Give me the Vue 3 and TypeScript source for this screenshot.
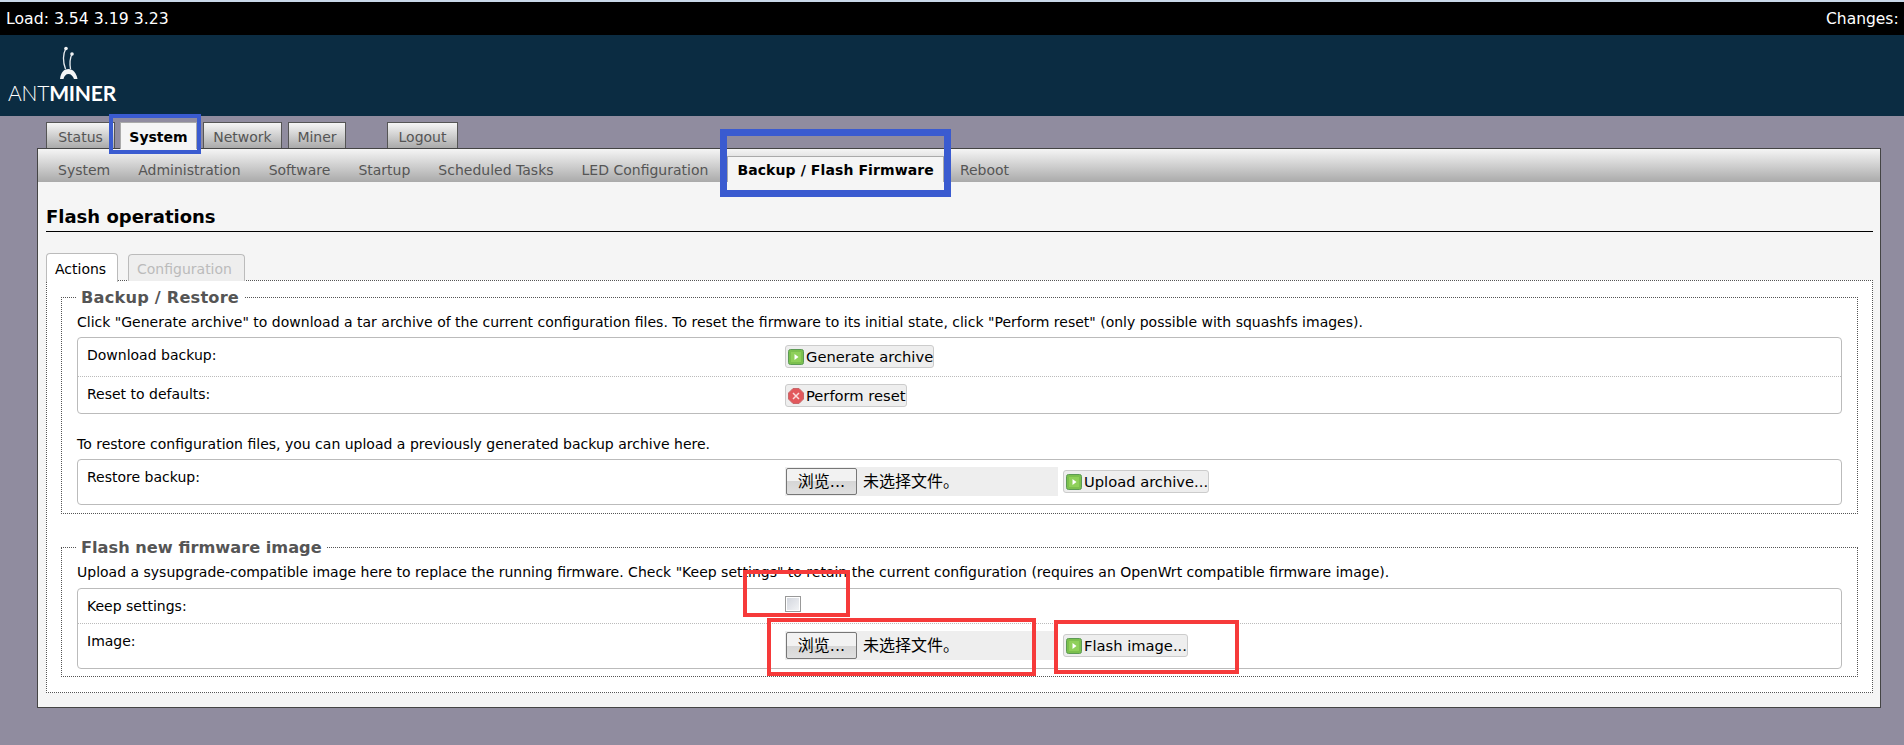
<script setup lang="ts">
const topTabs: { label: string; active?: boolean; gap?: boolean }[] = [
  { label: 'Status' },
  { label: 'System', active: true },
  { label: 'Network' },
  { label: 'Miner' },
  { label: 'Logout', gap: true },
]
const subTabs: { label: string; active?: boolean }[] = [
  { label: 'System' },
  { label: 'Administration' },
  { label: 'Software' },
  { label: 'Startup' },
  { label: 'Scheduled Tasks' },
  { label: 'LED Configuration' },
  { label: 'Backup / Flash Firmware', active: true },
  { label: 'Reboot' },
]
</script>

<template>
  <div class="page">
    <div class="status-bar">
      <span>Load: 3.54 3.19 3.23</span>
      <span class="changes">Changes: 0</span>
    </div>
    <header class="brand">
      <svg class="ant" width="20" height="34" viewBox="0 0 20 34">
        <path d="M7 2 C4 8 3.500 15 6.500 23" fill="none" stroke="#e8ecef" stroke-width="1.300" />
        <path d="M13 8 C11 12 10.500 17 11.500 23" fill="none" stroke="#e8ecef" stroke-width="1.300" />
        <circle cx="7" cy="2.500" r="1.800" fill="#f2f4f5" />
        <circle cx="13" cy="8" r="1.800" fill="#f2f4f5" />
        <path d="M1 33 C2 26 5 23 9.500 23 C14 23 17.500 27 18.500 33 L15 33 C14 30 12 28 9.500 28 C7 28 5 30 4.500 33 Z" fill="#f2f4f5" />
      </svg>
      <div class="wordmark"><span class="thin">ANT</span><span class="bold">MINER</span></div>
    </header>

    <nav class="top-tabs">
      <a v-for="t in topTabs" :key="t.label" class="top-tab" :class="{ on: t.active, spaced: t.gap }">{{ t.label }}</a>
    </nav>

    <main class="main">
      <nav class="sub-tabs">
        <a v-for="t in subTabs" :key="t.label" class="sub-tab" :class="{ on: t.active }">{{ t.label }}</a>
      </nav>
      <div class="content">
        <h2 class="title">Flash operations</h2>
        <div class="inner-tabs">
          <span class="inner-tab on">Actions</span>
          <span class="inner-tab off">Configuration</span>
        </div>
        <section class="panel">
          <fieldset class="group first">
            <legend><span>Backup / Restore</span></legend>
            <p class="desc">Click "Generate archive" to download a tar archive of the current configuration files. To reset the firmware to its initial state, click "Perform reset" (only possible with squashfs images).</p>
            <div class="box">
              <div class="row r39 dotted">
                <label>Download backup:</label>
                <div class="field">
                  <button class="btn"><svg class="ico" viewBox="0 0 16 16"><rect x="0.500" y="0.500" width="15" height="15" rx="2" fill="#7cc04e" stroke="#5c9a55" /><rect x="3" y="3" width="10" height="10" fill="#8fd05a" /><path d="M6.500 5 L10.500 8 L6.500 11 Z" fill="#fff" /></svg>Generate archive</button>
                </div>
              </div>
              <div class="row r36">
                <label>Reset to defaults:</label>
                <div class="field">
                  <button class="btn"><svg class="ico" viewBox="0 0 16 16"><path d="M5 0.500 H11 L15.500 5 V11 L11 15.500 H5 L0.500 11 V5 Z" fill="#e2585c" stroke="#c7686b" /><path d="M5 5 L11 11 M11 5 L5 11" stroke="#fbdcdc" stroke-width="1.500" /></svg>Perform reset</button>
                </div>
              </div>
            </div>
            <p class="desc restore">To restore configuration files, you can upload a previously generated backup archive here.</p>
            <div class="box">
              <div class="row r44">
                <label>Restore backup:</label>
                <div class="field">
                  <div class="file"><span class="browse">浏览...</span><span class="none">未选择文件。</span></div>
                  <button class="btn next"><svg class="ico" viewBox="0 0 16 16"><rect x="0.500" y="0.500" width="15" height="15" rx="2" fill="#7cc04e" stroke="#5c9a55" /><rect x="3" y="3" width="10" height="10" fill="#8fd05a" /><path d="M6.500 5 L10.500 8 L6.500 11 Z" fill="#fff" /></svg>Upload archive...</button>
                </div>
              </div>
            </div>
          </fieldset>

          <fieldset class="group second">
            <legend><span>Flash new firmware image</span></legend>
            <p class="desc low">Upload a sysupgrade-compatible image here to replace the running firmware. Check "Keep settings" to retain the current configuration (requires an OpenWrt compatible firmware image).</p>
            <div class="box">
              <div class="row r35 dotted">
                <label>Keep settings:</label>
                <div class="field"><span class="check"></span></div>
              </div>
              <div class="row r44">
                <label>Image:</label>
                <div class="field">
                  <div class="file"><span class="browse">浏览...</span><span class="none">未选择文件。</span></div>
                  <button class="btn next"><svg class="ico" viewBox="0 0 16 16"><rect x="0.500" y="0.500" width="15" height="15" rx="2" fill="#7cc04e" stroke="#5c9a55" /><rect x="3" y="3" width="10" height="10" fill="#8fd05a" /><path d="M6.500 5 L10.500 8 L6.500 11 Z" fill="#fff" /></svg>Flash image...</button>
                </div>
              </div>
            </div>
          </fieldset>
        </section>
      </div>
    </main>

    <i class="mark blue small"></i>
    <i class="mark blue big"></i>
    <i class="mark red r1"></i>
    <i class="mark red r2"></i>
    <i class="mark red r3"></i>
  </div>
</template>

<style>
html, body { margin: 0; background: #908c9f; }
</style>

<style scoped>
.page {
  position: relative;
  height: 745px;
  overflow: hidden;
  background: #908c9f;
  border-top: 2px solid #c9d8e8;
  box-sizing: border-box;
  font: 14px/18px "DejaVu Sans", Verdana, "Noto Sans CJK SC", sans-serif;
  color: #000;
}
.status-bar {
  height: 33px;
  background: #000;
  color: #fff;
  display: flex;
  justify-content: space-between;
  align-items: center;
  padding-left: 6px;
  font-size: 15.700px;
}
.changes { width: 78px; overflow: hidden; white-space: nowrap; font-size: 15.500px; }
.brand {
  height: 81px;
  background: #0b2c42;
  box-sizing: border-box;
  padding: 11px 0 0 8px;
  color: #fff;
}
.ant { display: block; margin-left: 51px; }
.wordmark { font: 21px/26px Lato, sans-serif; letter-spacing: -0.200px; white-space: nowrap; }
.wordmark .thin { font-weight: 300; }
.wordmark .bold { font-weight: 700; }

.top-tabs { display: flex; align-items: flex-start; gap: 5px; padding: 6px 0 0 46px; height: 26px; }
.top-tab {
  box-sizing: border-box;
  height: 26px;
  padding: 4px 0 0;
  text-align: center;
  background: linear-gradient(#f5f5f5, #aaa);
  border: 1px solid #555;
  border-bottom: none;
  color: #555;
  line-height: 20px;
  position: relative;
  z-index: 1;
}
.top-tab:nth-child(1) { width: 69px; }
.top-tab:nth-child(2) { width: 77px; }
.top-tab:nth-child(3) { width: 79px; margin-left: 1px; }
.top-tab:nth-child(4) { width: 58px; margin-left: 1px; }
.top-tab:nth-child(5) { width: 71px; }
.top-tab.on { height: 27px; background: #f5f5f5; color: #000; font-weight: 700; border-color: #aaa; }
.top-tab.spaced { margin-left: 36px; }

.main {
  margin: 0 23px 0 37px;
  height: 560px;
  box-sizing: border-box;
  border: 1px solid #444;
  background: #f5f5f5;
}
.sub-tabs {
  height: 33px;
  display: flex;
  padding-left: 6px;
  background: linear-gradient(#f5f5f5, #aaa);
}
.sub-tab { padding: 11px 14px 0; color: #555; line-height: 20px; white-space: nowrap; }
.sub-tab.on {
  margin: 7px 2px 0 5px;
  padding: 0 9px;
  height: 26px;
  box-sizing: border-box;
  background: #f5f5f5;
  border: 1px solid #aaa;
  border-bottom: none;
  color: #000;
  font-weight: 700;
  line-height: 26px;
  letter-spacing: 0.100px;
}

.content { padding: 0 7px 0 8px; }
.title {
  margin: 0;
  height: 50px;
  box-sizing: border-box;
  padding-top: 23px;
  font-size: 18px;
  line-height: 24px;
  font-weight: 700;
  border-bottom: 1px solid #000;
}
.inner-tabs { display: flex; gap: 10px; height: 29px; margin-top: 21px; margin-bottom: -2px; position: relative; z-index: 1; }
.inner-tab { box-sizing: border-box; border-radius: 4px 4px 0 0; padding: 0 8px; line-height: 30px; }
.inner-tab.on { background: #fff; border: 1px solid #bbb; border-bottom: none; height: 29px; width: 72px; }
.inner-tab.off { background: #eee; color: #bbb; border: 1px solid #bbb; border-bottom: none; height: 27px; margin-top: 1px; line-height: 28px; width: 117px; }

.panel {
  box-sizing: border-box;
  height: 413px;
  background: #fff;
  border: 1px dotted #555;
  padding: 0 14px;
}
.group {
  margin: 0;
  padding: 0 15px;
  border: 1px dotted #555;
  min-width: 0;
  box-sizing: border-box;
}
.group.first { margin-top: 6px; height: 227px; }
.group.first legend { letter-spacing: 0.200px; }
.group.second { margin-top: 23px; height: 140px; }
legend {
  margin-left: -1px;
  padding: 0 5px;
  font-size: 16.200px;
  line-height: 20px;
  font-weight: 700;
  color: #555;
}
legend span { position: relative; top: 1px; }
.desc { margin: 6px 0 6px; line-height: 18px; white-space: nowrap; }
.desc.low { margin-bottom: 7px; }
.desc.restore { margin: 21px 0 6px; }
.box {
  border: 1px solid #bbb;
  border-radius: 4px;
}
.row { display: grid; grid-template-columns: 707px 1fr; box-sizing: border-box; }
.r39 { height: 39px; }
.r36 { height: 36px; }
.r44 { height: 44px; }
.r35 { height: 35px; }
.dotted { border-bottom: 1px dotted #bbb; }
.row label { padding: 8px 0 0 9px; }
.field { padding-top: 7px; display: flex; align-items: flex-start; }

.btn {
  box-sizing: border-box;
  height: 23px;
  display: inline-flex;
  align-items: center;
  gap: 2px;
  padding: 0 0 0 2px;
  background: #eee;
  border: 1px solid #ccc;
  border-radius: 3px;
  font: 14.700px/20px "DejaVu Sans", Verdana, sans-serif;
  color: #000;
}
.ico { width: 16px; height: 16px; flex: none; }
.btn.next { margin: 3px 0 0 5px; }

.file {
  width: 273px;
  height: 29px;
  background: #eee;
  display: flex;
  align-items: center;
  font-size: 16px;
}
.browse {
  box-sizing: border-box;
  width: 71px;
  height: 27px;
  margin-left: 1px;
  line-height: 25px;
  text-align: center;
  border: 1px solid #777;
  border-radius: 2px;
  background: linear-gradient(#f2f2f2 50%, #d6d6d6 50%, #e0e0e0);
}
.none { margin-left: 6px; }
.check {
  display: block;
  box-sizing: border-box;
  width: 16px;
  height: 16px;
  border: 1px solid #999;
  background: linear-gradient(135deg, #d0d4dc, #f4f5f7);
  box-shadow: inset 0 0 0 1px #fff;
}

.mark { position: absolute; box-sizing: border-box; pointer-events: none; z-index: 5; }
.blue { border-style: solid; border-color: #3a5bd0; }
.red { border-style: solid; border-color: #f63a3a; border-width: 4px; }
.small { left: 109px; top: 112px; width: 92px; height: 40px; border-width: 4px; }
.big { left: 720px; top: 127px; width: 231px; height: 68px; border-width: 7px; }
.r1 { left: 743px; top: 568px; width: 107px; height: 47px; }
.r2 { left: 767px; top: 616px; width: 269px; height: 58px; }
.r3 { left: 1054px; top: 618px; width: 185px; height: 54px; }
</style>
